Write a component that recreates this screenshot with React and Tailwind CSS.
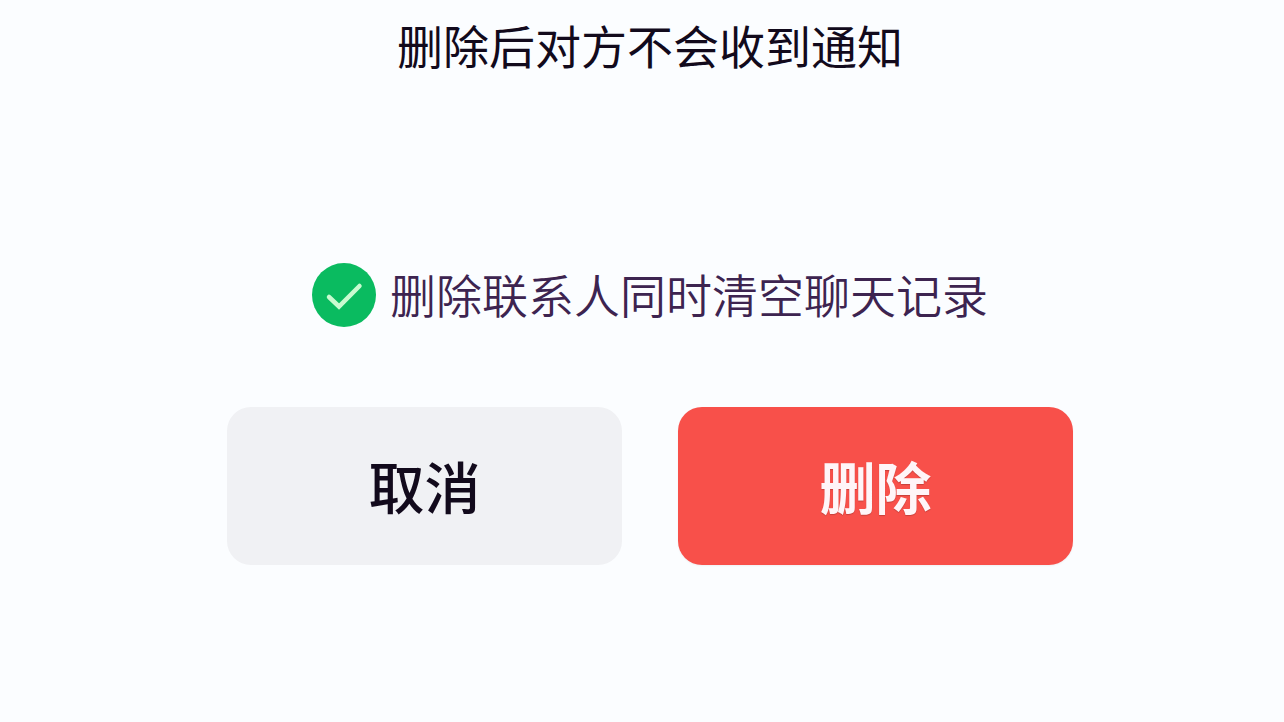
import React, { useState } from 'react';

function RoundCheckbox({ id, checked, onChange }) {
    return (
        <span className="relative flex shrink-0">
            <input
                id={id}
                type="checkbox"
                checked={checked}
                onChange={onChange}
                className="size-16 appearance-none rounded-full border-2 border-slate-300 checked:border-0 checked:bg-[#0abb60] cursor-pointer"
            />
            {checked && (
                <svg viewBox="0 0 64 64" fill="none" className="absolute inset-0 size-16 pointer-events-none" aria-hidden="true">
                    <path d="M17 34 27 43.5 47.5 23" stroke="#c9fbd0" strokeWidth="4.5" strokeLinecap="round" strokeLinejoin="miter" />
                </svg>
            )}
        </span>
    );
}

export default function App() {
    const [clearHistory, setClearHistory] = useState(true);

    return (
        <main className="min-h-screen bg-[#fbfdff] pl-4 pt-4 font-['Liberation_Sans','Noto_Sans_CJK_SC',sans-serif]">
            <div className="mx-auto flex w-full max-w-[846px] flex-col items-center">
                <h1 className="text-[46px] leading-[64px] font-normal text-[#120a1c] text-center">删除后对方不会收到通知</h1>

                {/* Clear history option */}
                <div className="mt-[183px] flex items-center gap-3.5">
                    <RoundCheckbox id="clear-history" checked={clearHistory} onChange={(e) => setClearHistory(e.target.checked)} />
                    <label htmlFor="clear-history" className="pt-1 text-[46px] leading-[60px] font-[350] text-[#3d2450] cursor-pointer">
                        删除联系人同时清空聊天记录
                    </label>
                </div>

                {/* Actions */}
                <div className="mt-20 grid w-full grid-cols-2 gap-14">
                    <button type="button" className="h-[158px] rounded-3xl bg-[#f0f1f4] pt-2 text-[56px] font-medium text-[#120a1c] cursor-pointer">
                        取消
                    </button>
                    <button type="button" className="h-[158px] rounded-3xl bg-[#f8504a] pt-2 text-[56px] font-bold text-[#fff5f8] shadow-xs text-shadow-xs cursor-pointer">
                        删除
                    </button>
                </div>
            </div>
        </main>
    );
}
